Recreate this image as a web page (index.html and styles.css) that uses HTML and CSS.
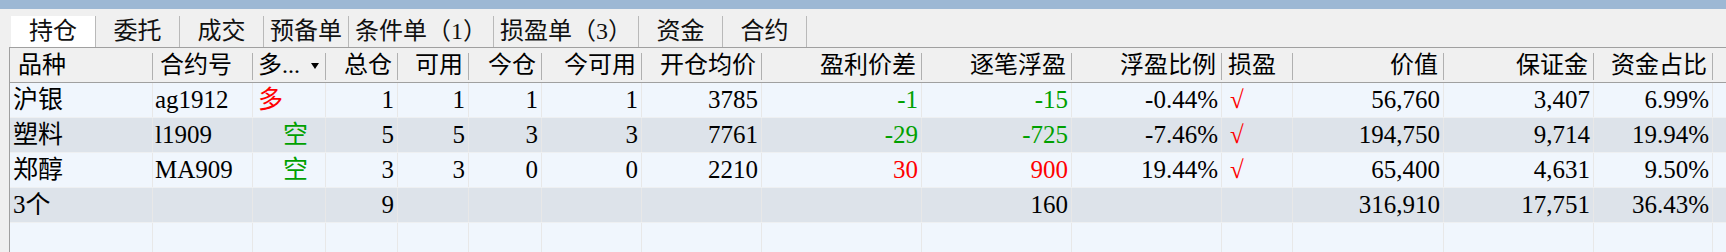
FILE: index.html
```html
<!DOCTYPE html>
<html lang="zh-CN">
<head>
<meta charset="utf-8">
<title>持仓</title>
<link rel="stylesheet" href="styles.css">
</head>
<body>
<div class="topbar"></div>
<div class="tabs">
  <div class="tab active">持仓</div>
  <div class="tab">委托</div>
  <div class="tab">成交</div>
  <div class="tab">预备单</div>
  <div class="tab">条件单（1）</div>
  <div class="tab">损盈单（3）</div>
  <div class="tab">资金</div>
  <div class="tab">合约</div>
</div>
<div class="grid">
  <div class="row head">
    <div class="c l pl8">品种</div>
    <div class="c l pl7">合约号</div>
    <div class="c l pl5 sort">多...<span class="tri"></span></div>
    <div class="c r">总仓</div>
    <div class="c r">可用</div>
    <div class="c r">今仓</div>
    <div class="c r">今可用</div>
    <div class="c r">开仓均价</div>
    <div class="c r">盈利价差</div>
    <div class="c r">逐笔浮盈</div>
    <div class="c r">浮盈比例</div>
    <div class="c l pl6">损盈</div>
    <div class="c r">价值</div>
    <div class="c r">保证金</div>
    <div class="c r">资金占比</div>
    <div class="c last"></div>
  </div>
  <div class="row light">
    <div class="c l pl3">沪银</div>
    <div class="c l pl2">ag1912</div>
    <div class="c l pl5 red">多</div>
    <div class="c r">1</div>
    <div class="c r">1</div>
    <div class="c r">1</div>
    <div class="c r">1</div>
    <div class="c r">3785</div>
    <div class="c r green">-1</div>
    <div class="c r green">-15</div>
    <div class="c r">-0.44%</div>
    <div class="c l pl8 red">√</div>
    <div class="c r">56,760</div>
    <div class="c r">3,407</div>
    <div class="c r">6.99%</div>
    <div class="c last"></div>
  </div>
  <div class="row dark">
    <div class="c l pl3">塑料</div>
    <div class="c l pl2">l1909</div>
    <div class="c l pl30 green">空</div>
    <div class="c r">5</div>
    <div class="c r">5</div>
    <div class="c r">3</div>
    <div class="c r">3</div>
    <div class="c r">7761</div>
    <div class="c r green">-29</div>
    <div class="c r green">-725</div>
    <div class="c r">-7.46%</div>
    <div class="c l pl8 red">√</div>
    <div class="c r">194,750</div>
    <div class="c r">9,714</div>
    <div class="c r">19.94%</div>
    <div class="c last"></div>
  </div>
  <div class="row light">
    <div class="c l pl3">郑醇</div>
    <div class="c l pl2">MA909</div>
    <div class="c l pl30 green">空</div>
    <div class="c r">3</div>
    <div class="c r">3</div>
    <div class="c r">0</div>
    <div class="c r">0</div>
    <div class="c r">2210</div>
    <div class="c r red">30</div>
    <div class="c r red">900</div>
    <div class="c r">19.44%</div>
    <div class="c l pl8 red">√</div>
    <div class="c r">65,400</div>
    <div class="c r">4,631</div>
    <div class="c r">9.50%</div>
    <div class="c last"></div>
  </div>
  <div class="row dark">
    <div class="c l pl3">3个</div>
    <div class="c"></div>
    <div class="c"></div>
    <div class="c r">9</div>
    <div class="c"></div>
    <div class="c"></div>
    <div class="c"></div>
    <div class="c"></div>
    <div class="c"></div>
    <div class="c r">160</div>
    <div class="c"></div>
    <div class="c"></div>
    <div class="c r">316,910</div>
    <div class="c r">17,751</div>
    <div class="c r">36.43%</div>
    <div class="c last"></div>
  </div>
  <div class="row light empty">
    <div class="c"></div><div class="c"></div><div class="c"></div><div class="c"></div>
    <div class="c"></div><div class="c"></div><div class="c"></div><div class="c"></div>
    <div class="c"></div><div class="c"></div><div class="c"></div><div class="c"></div>
    <div class="c"></div><div class="c"></div><div class="c"></div><div class="c last"></div>
  </div>
</div>
</body>
</html>
```
FILE: styles.css
```css
html, body {
  margin: 0;
  padding: 0;
  background: #f0f0f0;
  overflow: hidden;
}
body {
  width: 1726px;
  height: 252px;
  font-family: "Liberation Serif", "Noto Sans CJK SC", serif;
  color: #000;
}
.topbar {
  height: 9px;
  background: #9db8d4;
}
.tabs {
  display: flex;
  height: 31px;
  padding: 7px 0 0 11px;
}
.tab {
  min-width: 84px;
  padding: 0 6px;
  box-sizing: border-box;
  border-right: 1px solid #b9b9b9;
  display: flex;
  align-items: center;
  justify-content: center;
  font-size: 24px;
  line-height: 31px;
  color: #111;
  white-space: nowrap;
}
.tab:first-child { min-width: 85px; }
.tab.active {
  background: #ffffff;
}
.grid {
  margin-left: 9px;
  border-left: 1px solid #a0a0a0;
  border-top: 1px solid #a0a0a0;
  height: 205px;
  background: #f0f6fd;
  overflow: hidden;
}
.row {
  display: grid;
  grid-template-columns: 143px 100px 73px 72px 71px 73px 100px 120px 160px 150px 150px 71px 151px 150px 119px 1fr;
  height: 35px;
  box-sizing: border-box;
  border-bottom: 1px solid #eef0f2;
}
.row.head {
  height: 35px;
  background: #f0f0f0;
  border-bottom: 1px solid #a0a0a0;
  font-size: 24px;
}
.row.light { background: #f0f6fd; font-size: 25px; }
.row.dark { background: #dde3ea; font-size: 25px; }
.row.empty { height: 40px; border-bottom: none; }
.c {
  position: relative;
  display: flex;
  align-items: center;
  box-sizing: border-box;
  border-right: 1px solid #e8e8e8;
  white-space: nowrap;
  line-height: 30px;
  overflow: hidden;
}
.head .c {
  border-right: none;
}
.head .c::after {
  content: "";
  position: absolute;
  right: 0;
  top: 5px;
  bottom: 2px;
  width: 1px;
  background: #b0b0b0;
  box-shadow: 1px 0 0 #ffffff;
}
.head .c.last::after { display: none; }
.c.last { border-right: none; }
.r { justify-content: flex-end; padding-right: 3px; }
.head .r { padding-right: 6px; }
.l { justify-content: flex-start; }
.pl2 { padding-left: 2px; }
.pl3 { padding-left: 3px; }
.pl5 { padding-left: 5px; }
.pl6 { padding-left: 6px; }
.pl7 { padding-left: 7px; }
.pl8 { padding-left: 8px; }
.pl30 { padding-left: 30px; }
.sort { position: relative; }
.tri {
  position: absolute;
  right: 7px;
  top: 15px;
  width: 0;
  height: 0;
  border-left: 4px solid transparent;
  border-right: 4px solid transparent;
  border-top: 6px solid #000;
}
.red { color: #ff0000; }
.green { color: #00a000; }
```
